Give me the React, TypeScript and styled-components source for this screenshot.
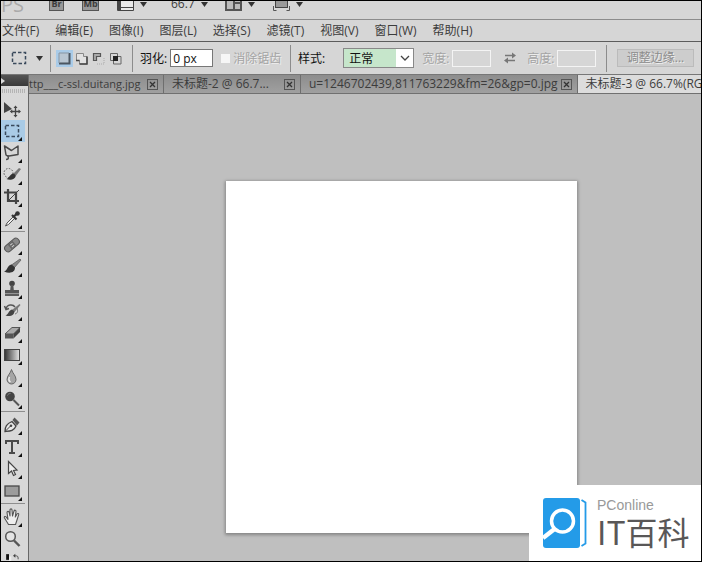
import React from "react";
import styled, { createGlobalStyle } from "styled-components";

const GlobalStyle = createGlobalStyle`
  * { box-sizing: border-box; }
  html, body { margin: 0; height: 100%; }
  body, button, input, select {
    font-family: "Open Sans", "Noto Sans CJK SC", sans-serif;
    font-size: 12px;
    color: #3c3c3c;
  }
  button { border: 0; padding: 0; background: none; }
`;

const Frame = styled.div`
  height: 100vh;
  display: flex;
  flex-direction: column;
  border: 1px solid #000;
  background: #d6d6d6;
  overflow: hidden;
  position: relative;
`;

const AppBar = styled.header`
  flex: none;
  height: 19px;
  display: flex;
  align-items: flex-end;
  padding-bottom: 8px;
  border-bottom: 1px solid #8c8c8c;
  overflow: hidden;
  white-space: nowrap;
`;

const Brand = styled.span`
  width: 48px;
  font-size: 20px;
  line-height: 20px;
  height: 16px;
  color: #aaa;
`;

const BarButton = styled.button<{ $gap: number }>`
  flex: none;
  height: 14px;
  margin-right: ${(p) => p.$gap}px;
  display: flex;
  align-items: center;
  gap: 6px;
  line-height: 14px;
`;

const Chip = styled.span<{ $wide?: boolean }>`
  width: ${(p) => (p.$wide ? 17 : 15)}px;
  height: 14px;
  border: 1px solid #555;
  background: #989898;
  font-size: 9px;
  font-weight: 700;
  line-height: 11px;
  text-align: center;
`;

const MenuBar = styled.nav`
  flex: none;
  height: 22px;
  display: flex;
  align-items: center;
  gap: 16px;
  padding-left: 1px;
  border-bottom: 1px solid #5c5c5c;
`;

const MenuItem = styled.button`
  flex: none;
  line-height: 20px;
  white-space: nowrap;
`;

const OptionsBar = styled.section`
  flex: none;
  height: 33px;
  display: flex;
  align-items: center;
  border-bottom: 1px solid #777;
  white-space: nowrap;
`;

const OptionGroup = styled.div<{ $width: number; $left: number; $gap?: number }>`
  flex: none;
  width: ${(p) => p.$width}px;
  height: 27px;
  padding-left: ${(p) => p.$left}px;
  display: flex;
  align-items: center;
  gap: ${(p) => p.$gap ?? 4}px;
  border-right: 1px solid #8c8c8c;
  &:last-child { border-right: 0; flex: 1; }
`;

const ModeButton = styled.button<{ $active?: boolean }>`
  width: 17px;
  height: 17px;
  display: grid;
  place-items: center;
  background: ${(p) => (p.$active ? "#a9cbe8" : "none")};
`;

const FieldLabel = styled.label<{ $muted?: boolean }>`
  display: flex;
  align-items: center;
  gap: 3px;
  color: ${(p) => (p.$muted ? "#a4a4a4" : "#111")};
  text-shadow: ${(p) => (p.$muted ? "1px 1px 0 #eee" : "none")};
`;

const TextField = styled.input`
  width: 43px;
  height: 18px;
  padding: 0 2px;
  border: 1px solid #777;
  background: #fff;
  color: #111;
  &:disabled {
    width: 39px;
    height: 17px;
    border: 1px solid #f4f4f4;
    background: #d6d6d6;
  }
`;

const Tick = styled.input`
  appearance: none;
  width: 9px;
  height: 9px;
  margin: 0;
  background: #f6f6f6;
`;

const SelectBox = styled.span`
  position: relative;
  display: flex;
  margin-left: 15px;
  svg { position: absolute; right: 4px; top: 7px; pointer-events: none; }
`;

const Select = styled.select`
  appearance: none;
  width: 71px;
  height: 20px;
  padding: 0 5px;
  border: 1px solid #888;
  border-radius: 0;
  background: linear-gradient(to right, #c6e6cb 52px, #fff 52px);
  color: #111;
`;

const SwapButton = styled.button`
  width: 12px;
  height: 12px;
  margin: 0 3px 0 5px;
  display: grid;
`;

const RefineButton = styled.button`
  width: 77px;
  height: 18px;
  border: 1px solid #bbb;
  background: #cdcdcd;
  color: #8c8c8c;
  text-shadow: 1px 1px 0 #eee;
  line-height: 16px;
`;

const Workbench = styled.main`
  flex: 1;
  min-height: 0;
  display: flex;
`;

const ToolBox = styled.aside`
  flex: none;
  width: 28px;
  display: flex;
  flex-direction: column;
  border-right: 1px solid #686868;
  background: #d8d8d8;
  overflow: hidden;
`;

const ToolHeader = styled.div`
  flex: none;
  height: 11px;
  display: flex;
  align-items: center;
  background: linear-gradient(#555, #393939);
`;

const Grip = styled.div`
  flex: none;
  height: 4px;
  margin: 3px 3px 5px 1px;
  background: repeating-linear-gradient(to right, #b4b4b4 0 1px, #d8d8d8 1px 2px);
`;

const ToolGroup = styled.div`
  flex: none;
  display: flex;
  flex-direction: column;
  width: 24px;
  padding-bottom: 1px;
  border-bottom: 1px solid #8e8e8e;
  margin-bottom: 2px;
  &:last-of-type { border-bottom: 0; }
`;

const ToolButton = styled.button<{ $active?: boolean }>`
  height: 22px;
  display: block;
  background: ${(p) => (p.$active ? "#a9cbe6" : "none")};
  svg { display: block; }
`;

const DocumentArea = styled.div`
  flex: 1;
  min-width: 0;
  display: flex;
  flex-direction: column;
`;

const TabBar = styled.div`
  flex: none;
  height: 19px;
  display: flex;
  background: linear-gradient(#8d8d8d, #a0a0a0);
  border-bottom: 1px solid #707070;
  overflow: hidden;
`;

const Tab = styled.div<{ $active?: boolean; $first?: boolean }>`
  flex: none;
  height: 18px;
  display: flex;
  align-items: center;
  gap: 3px;
  padding: 0 5px 0 ${(p) => (p.$first ? 0 : 8)}px;
  border-right: 1px solid #6e6e6e;
  background: ${(p) => (p.$active ? "#dcdcdc" : "none")};
`;

const TabTitle = styled.button<{ $width?: number; $small?: boolean }>`
  min-width: ${(p) => p.$width ?? 0}px;
  font-size: ${(p) => (p.$small ? 11 : 12)}px;
  text-align: left;
  line-height: 18px;
  white-space: nowrap;
`;

const TabClose = styled.button`
  width: 11px;
  height: 11px;
  display: grid;
`;

const Pasteboard = styled.div`
  flex: 1;
  display: grid;
  grid-template-columns: 197fr 351fr 124fr;
  grid-template-rows: 87fr 352fr 28fr;
  background: #bfbfbf;
`;

const Paper = styled.div`
  grid-area: 2 / 2;
  background: #fff;
  box-shadow: 0 1px 3px 1px #858585;
`;

const Badge = styled.div`
  position: absolute;
  right: 0;
  bottom: 0;
  width: 172px;
  height: 76px;
  display: flex;
  align-items: center;
  gap: 10px;
  padding-left: 14px;
  background: #fff;
`;

const BadgeText = styled.div`
  display: flex;
  flex-direction: column;
`;

const BadgeSmall = styled.span`
  font: 14px/16px "Liberation Sans", sans-serif;
  color: #999;
`;

const BadgeLarge = styled.span`
  font: 400 32px/36px "Noto Sans CJK SC", sans-serif;
  color: #595757;
  white-space: nowrap;
`;

const Caret = () => (
  <svg width="7" height="5" viewBox="0 0 7 5"><path d="M0 0h7L3.500 5z" fill="#333" /></svg>
);

const marquee = <rect x="4.500" y="5.500" width="13" height="11" fill="none" stroke="#3a4a5c" strokeWidth="1.500" strokeDasharray="3.500 2" />;

type Tool = { name: string; art: React.ReactNode; plain?: boolean; active?: boolean };

const toolGroups: Tool[][] = [
  [
    { name: "Move", plain: true, art: <><path d="M3 4l8 7-8 4z" fill="#444" /><path d="M14.500 9v9M10 13.500h9" stroke="#444" strokeWidth="1.300" /><path d="M14.500 7.500l2 2.500h-4zM14.500 19.500l2-2.500h-4zM8.800 13.500l2.500-2v4zM20 13.500l-2.500-2v4z" fill="#444" /></> },
    { name: "Marquee", active: true, art: marquee },
    { name: "Lasso", art: <path d="M5 17.500c2 0 3-1 2-3l-2-1.500-1.500-9 7 4.500L17 4v8.500l-9 1.500-2.500-.5" fill="none" stroke="#4a4a4a" strokeWidth="1.500" strokeLinejoin="round" /> },
    { name: "Quick selection", art: <><circle cx="7.500" cy="9" r="4.500" fill="none" stroke="#555" strokeDasharray="1.500 1.500" /><path d="M18 4l2 1-6 8-3-2z" fill="#777" /><path d="M12 9.500c4 1 3 5-1 6-2 .7-4 .3-5.500-.5 3-1 3-4.500 6.500-5.500z" fill="#333" /></> },
    { name: "Crop", art: <><path d="M7 3v12h11M3 6.500h12V18" fill="none" stroke="#444" strokeWidth="2.200" /><path d="M7 15L18 4" stroke="#444" /></> },
    { name: "Eyedropper", art: <><path d="M12.500 8.500L6 15l-1.500 3 3-1.500L14 10" fill="#eee" stroke="#555" /><path d="M11 7l4.500 4.500M12.500 9L17 4.500" stroke="#333" strokeWidth="2.200" /><circle cx="16.500" cy="5.500" r="2.300" fill="#333" /></> },
  ],
  [
    { name: "Healing brush", art: <g transform="rotate(-40 11 11)"><rect x="2.500" y="7.500" width="17" height="7" rx="3.500" fill="#888" stroke="#555" /><path d="M8 8h6v6H8z" fill="#666" /><path d="M9.500 10h3M9.500 12.500h3" stroke="#ccc" /></g> },
    { name: "Brush", art: <><path d="M19 3l1 1-6.500 7.500-3-2.500z" fill="#888" stroke="#555" strokeWidth=".7" /><path d="M10.500 8.500l3.500 3c0 5-5 6.500-11 4 4-1 3-6.500 7.500-7z" fill="#333" /></> },
    { name: "Clone stamp", art: <><circle cx="11" cy="5.500" r="2.800" fill="#444" /><path d="M9.700 7h2.600l.5 5H18v3.500H4V12h5.200z" fill="#555" /><path d="M4 17h14" stroke="#333" strokeWidth="1.500" /></> },
    { name: "History brush", art: <><path d="M5 9c1-5 7-5 9-2M3.500 6l1.500 3.500 3-1" fill="none" stroke="#555" strokeWidth="1.500" /><path d="M18.500 4l1 1-6 7-2.500-2z" fill="#777" /><path d="M11 9.500l2.500 2c-1 5-5 5-9 4 3-1 3-5 6.500-6z" fill="#444" /><path d="M14 14c3-1 3-3 2-6" fill="none" stroke="#777" /></> },
    { name: "Eraser", art: <><path d="M4 12l7-6.500h8L12.500 12z" fill="#aaa" stroke="#555" /><path d="M4 12h8.500v4.500H4z" fill="#555" /><path d="M12.500 12L19 5.500V10l-6.500 6.500z" fill="#444" /></> },
    { name: "Gradient", art: <><defs><linearGradient id="ramp"><stop stopColor="#333" /><stop offset="1" stopColor="#e5e5e5" /></linearGradient></defs><rect x="3.500" y="5.500" width="15" height="11" fill="url(#ramp)" stroke="#444" /></> },
    { name: "Blur", art: <><path d="M10.500 3.500c1 4 4.500 6 4.500 10a4.500 4.500 0 01-9 0c0-4 3.500-6 4.500-10z" fill="#a5a5a5" stroke="#666" /><path d="M8.500 11c-1 2-.5 4 1 5" stroke="#eee" fill="none" strokeWidth="1.500" /></> },
    { name: "Dodge", art: <><circle cx="9" cy="8.500" r="4.800" fill="#444" /><path d="M12.500 12l5.500 5.500" stroke="#555" strokeWidth="2" /><path d="M6.500 7.500c.5-1.500 1.500-2 3-2" stroke="#888" fill="none" /></> },
  ],
  [
    { name: "Pen", art: <><path d="M4 17.500c0-5 1.500-7.500 7-10l4 4.500c-2 5-6 5-11 5.500z" fill="#e8e8e8" stroke="#444" strokeWidth="1.300" /><path d="M4.500 17l5-5" stroke="#444" /><circle cx="10" cy="11.800" r="1.300" fill="#444" /><path d="M11.500 6l2-2.500 5 5-2.500 3z" fill="#555" /></> },
    { name: "Type", art: <path d="M11 5v12M5 8V5h12v3M8 17h6" fill="none" stroke="#4a4a4a" strokeWidth="2" /> },
    { name: "Path selection", art: <path d="M7.500 3.500v12l3-2.500 2 4.500 2-1-2-4 3.500-.5z" fill="#eee" stroke="#444" strokeWidth="1.200" /> },
    { name: "Rectangle", art: <rect x="4" y="6" width="14" height="10" fill="#9c9c9c" stroke="#484848" strokeWidth="1.300" /> },
  ],
  [
    { name: "Hand", art: <path d="M7.500 18.500L3.500 12c-.8-1.500 1-2 2-.7l1.500 2-1-6.800c0-1.500 2-1.500 2.200 0L9 10V4c0-1.500 2-1.500 2 0l.5 6L13 5c.5-1.300 2-1 2 .3L14.300 11l1.700-3c.8-1 2-.5 1.700.7l-2.200 6.800-1 3z" fill="#eee" stroke="#555" strokeWidth="1.100" strokeLinejoin="round" /> },
    { name: "Zoom", plain: true, art: <><circle cx="9.500" cy="8.500" r="4.800" fill="#e4e4e4" stroke="#555" strokeWidth="1.500" /><path d="M13 12.500l5.500 5.500" stroke="#555" strokeWidth="2.400" /></> },
  ],
];

const modeIcons = [
  <><path d="M1 1h10v10H1z" fill="#b9c6d2" /><path d="M1 11.500h10.500V1" fill="none" stroke="#4c5661" strokeWidth="2" /><path d="M1 11V1h10" fill="none" stroke="#8795a3" /></>,
  <><path d="M1.500 1.500h7v3h3.500V12H4.500V8.500h-3z" fill="#e2e2e2" stroke="#888" /><path d="M4.500 12H12V4.500M1 8.500h3.500" fill="none" stroke="#444" strokeWidth="1.500" /></>,
  <><path d="M1.500 8.500v-7h7v3h-4v4z" fill="#aaa" stroke="#555" strokeWidth="1.200" /><path d="M5 12h7V5" fill="none" stroke="#aaa" strokeDasharray="1 1" /></>,
  <><path d="M1.500 1.500h7v7h-7zM4.500 4.500H12V12H4.500z" fill="none" stroke="#666" /><rect x="4" y="4" width="5" height="5" fill="#222" /></>,
];

const tabs = [
  { title: "ttp___c-ssl.duitang.jpg", width: 115, small: true },
  { title: "未标题-2 @ 66.7...", width: 109 },
  { title: "u=1246702439,811763229&fm=26&gp=0.jpg", width: 248 },
];

const menus = ["文件(F)", "编辑(E)", "图像(I)", "图层(L)", "选择(S)", "滤镜(T)", "视图(V)", "窗口(W)", "帮助(H)"];

export default function App() {
  return (
    <>
      <GlobalStyle />
      <Frame>
        <AppBar>
          <Brand>PS</Brand>
          <BarButton $gap={18}><Chip>Br</Chip></BarButton>
          <BarButton $gap={18}><Chip $wide>Mb</Chip></BarButton>
          <BarButton $gap={24} aria-label="View extras">
            <svg width="17" height="14" viewBox="0 0 17 14"><path d="M.5 0v13.500h16V0" fill="#e8e8e8" stroke="#444" /><path d="M1 0h3v13H1z" fill="#444" /><path d="M4 10.500h12" stroke="#444" /></svg>
            <Caret />
          </BarButton>
          <BarButton $gap={17}>66.7<Caret /></BarButton>
          <BarButton $gap={18} aria-label="Arrange documents">
            <svg width="17" height="14" viewBox="0 0 17 14"><path d="M0 0h17v14H0z" fill="#555" /><path d="M2 0h6v12H2zM10 0h5v5h-5zM10 7h5v5h-5z" fill="#bbb" /></svg>
            <Caret />
          </BarButton>
          <BarButton $gap={0} aria-label="Screen mode">
            <svg width="17" height="14" viewBox="0 0 17 14"><rect x="2.500" y="-3" width="12" height="13.500" fill="#999" stroke="#444" /><path d="M.5 9v4.500h3M16.500 9v4.500h-3" fill="none" stroke="#555" /></svg>
            <Caret />
          </BarButton>
        </AppBar>
        <MenuBar>{menus.map((m) => <MenuItem key={m}>{m}</MenuItem>)}</MenuBar>
        <OptionsBar>
          <OptionGroup $width={50} $left={7}>
            <svg width="24" height="22" viewBox="0 0 24 22">{marquee}</svg>
            <Caret />
          </OptionGroup>
          <OptionGroup $width={82} $left={5} $gap={0}>
            {modeIcons.map((icon, i) => (
              <ModeButton key={i} $active={i === 0} aria-label={`Selection mode ${i + 1}`}>
                <svg width="13" height="13" viewBox="0 0 13 13">{icon}</svg>
              </ModeButton>
            ))}
          </OptionGroup>
          <OptionGroup $width={158} $left={7} $gap={8}>
            <FieldLabel>羽化: <TextField defaultValue="0 px" /></FieldLabel>
            <FieldLabel $muted><Tick type="checkbox" disabled />消除锯齿</FieldLabel>
          </OptionGroup>
          <OptionGroup $width={316} $left={7} $gap={8}>
            <FieldLabel>
              样式:
              <SelectBox>
                <Select defaultValue="正常"><option>正常</option></Select>
                <svg width="10" height="6" viewBox="0 0 10 6"><path d="M1 1l4 4 4-4" fill="none" stroke="#444" strokeWidth="1.300" /></svg>
              </SelectBox>
            </FieldLabel>
            <FieldLabel $muted>宽度: <TextField disabled /></FieldLabel>
            <SwapButton aria-label="Swap width and height">
              <svg width="12" height="12" viewBox="0 0 12 12"><path d="M1 3.500h8M3 8.500h8" stroke="#777" strokeWidth="1.500" /><path d="M8 .5l4 3-4 3zM4 5.500l-4 3 4 3z" fill="#777" /></svg>
            </SwapButton>
            <FieldLabel $muted>高度: <TextField disabled /></FieldLabel>
          </OptionGroup>
          <OptionGroup $width={94} $left={10}><RefineButton>调整边缘...</RefineButton></OptionGroup>
        </OptionsBar>
        <Workbench>
          <ToolBox>
            <ToolHeader><svg width="5" height="8" viewBox="0 0 5 8"><path d="M0 1l4 3-4 3z" fill="#ddd" /></svg></ToolHeader>
            <Grip />
            {toolGroups.map((group, i) => (
              <ToolGroup key={i}>
                {group.map((t) => (
                  <ToolButton key={t.name} $active={t.active} aria-label={t.name}>
                    <svg width="24" height="22" viewBox="0 0 24 22">
                      {t.art}
                      {!t.plain && <path d="M21 17v4h-4z" fill="#111" />}
                    </svg>
                  </ToolButton>
                ))}
              </ToolGroup>
            ))}
            <svg width="24" height="14" viewBox="0 0 24 14"><path d="M0 2h5v10H0z" fill="#111" /><path d="M5 6h4v8H5z" fill="#eee" /><path d="M14 5h4c3 0 3 3 3 6" fill="none" stroke="#444" strokeWidth="1.500" /><path d="M16 1.500v7L12 5z" fill="#444" /></svg>
          </ToolBox>
          <DocumentArea>
            <TabBar>
              {tabs.map((t, i) => (
                <Tab key={t.title} $first={i === 0}>
                  <TabTitle $width={t.width} $small={t.small}>{t.title}</TabTitle>
                  <TabClose aria-label="Close">
                    <svg width="11" height="11" viewBox="0 0 11 11"><rect x=".5" y=".5" width="10" height="10" fill="none" stroke="#555" /><path d="M3 3l5 5M8 3L3 8" stroke="#333" strokeWidth="1.300" /></svg>
                  </TabClose>
                </Tab>
              ))}
              <Tab $active><TabTitle>未标题-3 @ 66.7%(RGB/8)</TabTitle></Tab>
            </TabBar>
            <Pasteboard><Paper /></Pasteboard>
          </DocumentArea>
        </Workbench>
        <Badge>
          <svg width="44" height="50" viewBox="0 0 44 50">
            <rect width="37" height="50" rx="3" fill="#249be8" />
            <path d="M38.500 2l4 2.500v41l-4 2.500" fill="none" stroke="#249be8" strokeWidth="1.800" />
            <circle cx="19.500" cy="23" r="11" fill="none" stroke="#fff" strokeWidth="3.500" />
            <path d="M11.500 31L0 40" stroke="#fff" strokeWidth="4.500" />
          </svg>
          <BadgeText>
            <BadgeSmall>PConline</BadgeSmall>
            <BadgeLarge>IT百科</BadgeLarge>
          </BadgeText>
        </Badge>
      </Frame>
    </>
  );
}
